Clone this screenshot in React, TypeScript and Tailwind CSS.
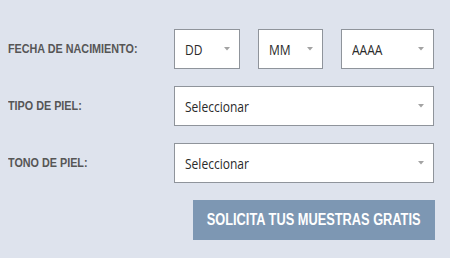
import React from 'react';

const labelCls =
  "w-[166px] shrink-0 text-[13px] font-bold text-[#565656] font-['Liberation_Sans',Arial,sans-serif] whitespace-nowrap";

function Caret() {
  return (
    <svg width="6" height="4" viewBox="0 0 6 4" className="shrink-0">
      <path d="M0 0 L6 0 L3 3.5 Z" fill="#a3a3a3" />
    </svg>
  );
}

function Label({ children }: { children: React.ReactNode }) {
  return (
    <div className={labelCls}>
      <span className="inline-block origin-left scale-x-[0.83]">{children}</span>
    </div>
  );
}

function SelectBox({ text, width }: { text: string; width: string }) {
  return (
    <div
      className={`${width} h-10 flex items-center justify-between bg-white border border-[#8f949b] pl-[10px] pr-[9px]`}
    >
      <span className="inline-block origin-left scale-x-[0.86] text-[14px] text-[#2a2a2a] font-['Open_Sans','Noto_Sans',sans-serif] whitespace-nowrap">
        {text}
      </span>
      <Caret />
    </div>
  );
}

export default function App() {
  return (
    <div className="w-[450px] h-[258px] bg-[#dee3ed] pt-[29px] pl-[8px] flex flex-col gap-[17px]">
      <div className="flex items-center">
        <Label>FECHA DE NACIMIENTO:</Label>
        <div className="flex gap-[18px]">
          <SelectBox text="DD" width="w-[66px]" />
          <SelectBox text="MM" width="w-[65px]" />
          <SelectBox text="AAAA" width="w-[93px]" />
        </div>
      </div>
      <div className="flex items-center">
        <Label>TIPO DE PIEL:</Label>
        <SelectBox text="Seleccionar" width="w-[260px]" />
      </div>
      <div className="flex items-center">
        <Label>TONO DE PIEL:</Label>
        <SelectBox text="Seleccionar" width="w-[260px]" />
      </div>
      <div className="flex justify-start pl-[185px]">
        <button className="w-[242px] h-10 bg-[#7d97b3] text-white text-[16px] font-bold whitespace-nowrap font-['Liberation_Sans',Arial,sans-serif] flex items-center justify-center overflow-hidden">
          <span className="inline-block scale-x-[0.8]">SOLICITA TUS MUESTRAS GRATIS</span>
        </button>
      </div>
    </div>
  );
}
